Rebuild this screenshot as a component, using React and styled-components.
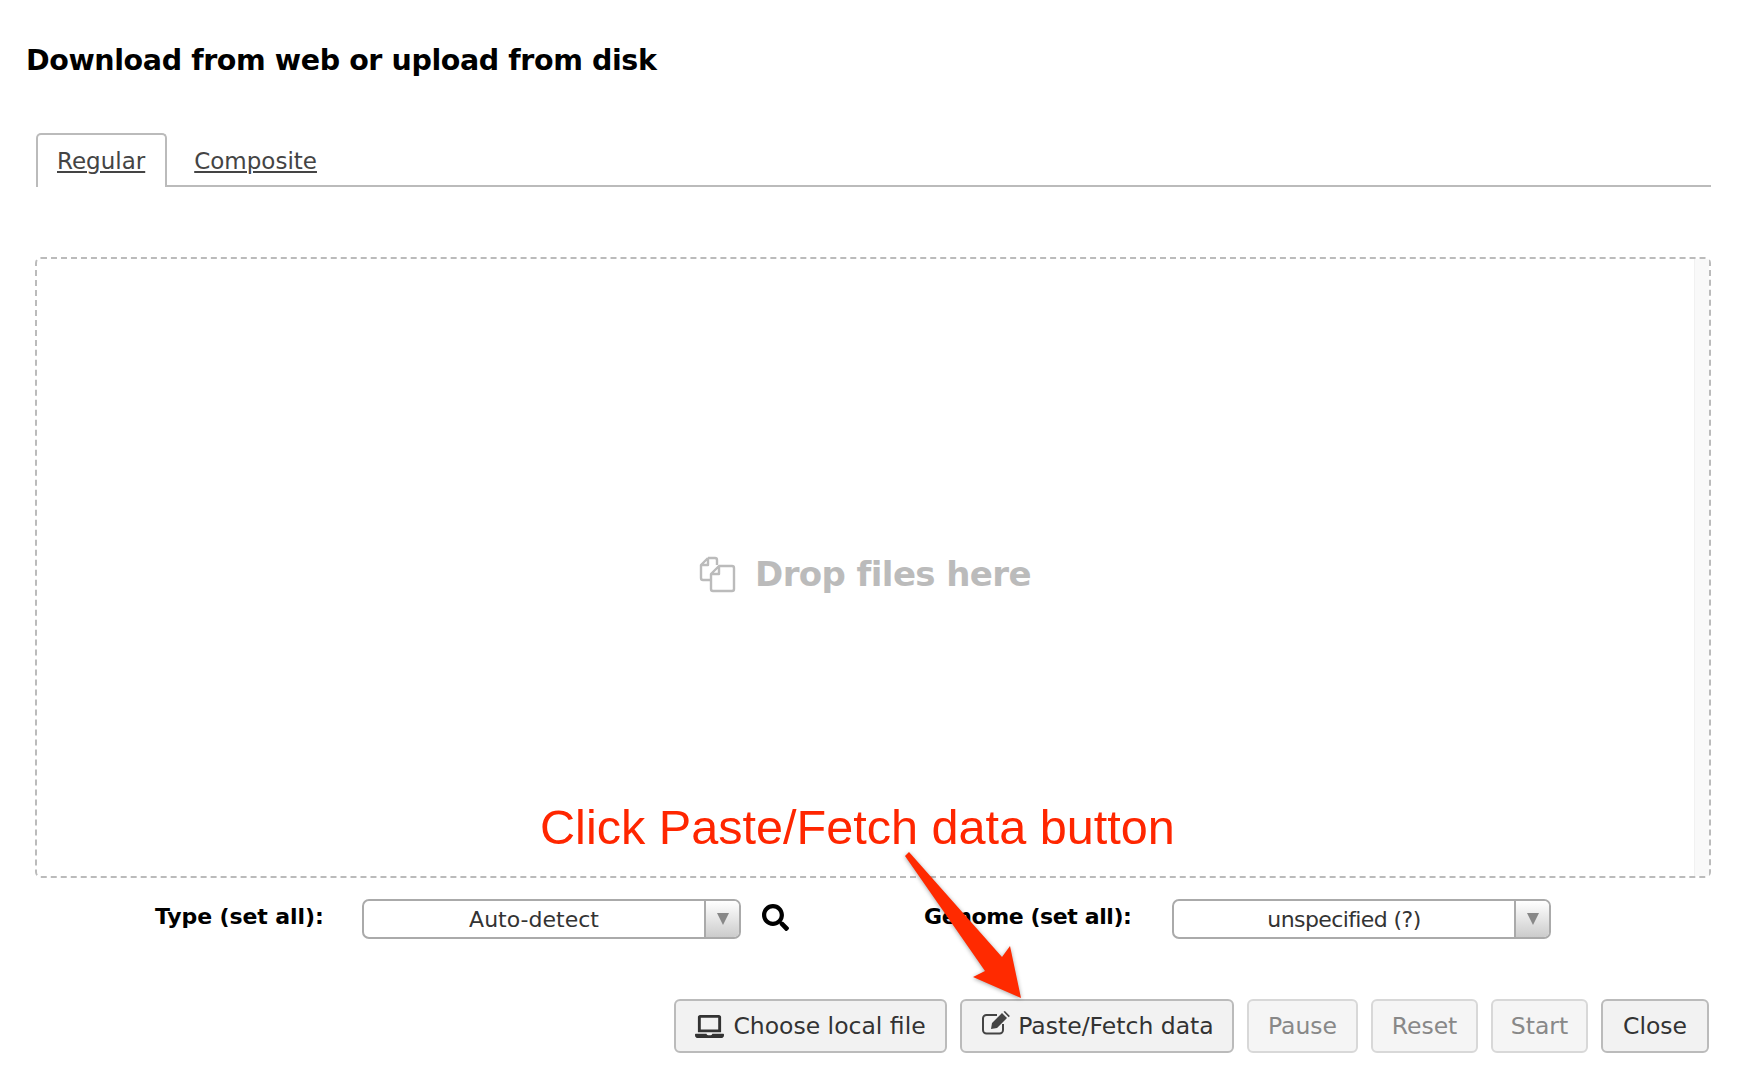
import React from "react";
import styled, { createGlobalStyle } from "styled-components";
import { FaSearch, FaLaptop } from "react-icons/fa";

const GlobalStyle = createGlobalStyle`
  html, body {
    margin: 0;
    padding: 0;
    background: #fff;
  }
  * {
    box-sizing: border-box;
  }
`;

const Page = styled.div`
  position: relative;
  width: 1737px;
  height: 1073px;
  overflow: hidden;
  padding: 43px 26px 0 26px;
  font-family: "DejaVu Sans", sans-serif;
  color: #333;
`;

const Title = styled.h1`
  margin: 0;
  height: 36px;
  font-size: 28.5px;
  line-height: 36px;
  font-weight: 700;
  color: #000;
  letter-spacing: -0.4px;
`;

const TabBar = styled.div`
  display: flex;
  margin: 54px 0 0 10px;
  width: 1675px;
  height: 54px;
  border-bottom: 2px solid #bbb;
`;

const Tab = styled.a`
  display: block;
  height: ${(p) => (p.$active ? "54px" : "52px")};
  padding: ${(p) => (p.$active ? "0 20px 0 19px" : "0 28px 0 27px")};
  line-height: ${(p) => (p.$active ? "52px" : "56px")};
  font-size: 23px;
  color: #444;
  text-decoration: underline;
  background: #fff;
  border: ${(p) => (p.$active ? "2px solid #bbb" : "0")};
  border-bottom: 0;
  border-radius: 5px 5px 0 0;
`;

const DropZone = styled.div`
  position: relative;
  display: flex;
  align-items: center;
  justify-content: center;
  gap: 19px;
  margin: 70px 0 0 9px;
  width: 1676px;
  height: 621px;
  padding: 13px 16px 0 0;
  border: 2px dashed #bbb;
  border-radius: 6px;
  color: #bbb;
`;

const ScrollStrip = styled.div`
  position: absolute;
  top: 0;
  right: 0;
  bottom: 0;
  width: 15px;
  background: #f9f9f9;
  border-left: 1px solid #f1f1f1;
`;

const DropText = styled.span`
  font-size: 34px;
  font-weight: 700;
  letter-spacing: -0.6px;
`;

const FilesIcon = styled.svg`
  width: 37px;
  height: 37px;
  fill: none;
  stroke: #bbb;
  stroke-width: 2.4;
  stroke-linejoin: round;
`;

const SetAllRow = styled.div`
  display: flex;
  align-items: center;
  height: 40px;
  margin-top: 21px;
  padding-left: 129px;
`;

const FieldLabel = styled.label`
  width: ${(p) => p.$width}px;
  font-size: 22px;
  font-weight: 700;
  letter-spacing: ${(p) => p.$tracking}px;
  color: #000;
  margin-top: -6px;
`;

const Select = styled.div`
  display: flex;
  width: 379px;
  height: 40px;
  border: 2px solid #aaa;
  border-radius: 7px;
  overflow: hidden;
  background: #fff;
`;

const SelectValue = styled.div`
  flex: 1;
  text-align: center;
  line-height: 37px;
  font-size: 22px;
  letter-spacing: ${(p) => p.$tracking || 0}px;
  color: #333;
`;

const SelectArrow = styled.div`
  display: flex;
  align-items: center;
  justify-content: center;
  width: 35px;
  border-left: 2px solid #aaa;
  background: linear-gradient(#fff, #ccc);
  &::after {
    content: "";
    border-left: 6px solid transparent;
    border-right: 6px solid transparent;
    border-top: 12px solid #888;
  }
`;

const SearchButton = styled.span`
  display: flex;
  width: 27px;
  margin: -3px 135px 0 21px;
  color: #000;
  font-size: 27px;
`;

const ButtonRow = styled.div`
  display: flex;
  justify-content: flex-end;
  gap: 13px;
  margin-top: 60px;
  padding-right: 2px;
`;

const Button = styled.button`
  display: flex;
  align-items: center;
  justify-content: center;
  gap: 9px;
  width: ${(p) => p.$width}px;
  height: 54px;
  padding: 0;
  font-family: inherit;
  font-size: 23.5px;
  color: ${(p) => (p.disabled ? "#888" : "#333")};
  background: ${(p) => (p.disabled ? "#f5f5f5" : "#f2f2f2")};
  border: 2px solid ${(p) => (p.disabled ? "#d8d8d8" : "#bbb")};
  border-radius: 6px;
  svg {
    font-size: 29px;
    flex: none;
  }
`;

const EditIcon = styled.svg`
  width: 29px;
  height: 24px;
  margin: -7px -2px 0 2px;
`;

const Callout = styled.div`
  position: absolute;
  left: 540px;
  top: 798px;
  font-family: "Liberation Sans", Arial, sans-serif;
  font-size: 48.6px;
  line-height: 58px;
  color: #ff2600;
  white-space: nowrap;
`;

const CalloutArrow = styled.svg`
  position: absolute;
  left: 880px;
  top: 830px;
  width: 170px;
  height: 190px;
  filter: drop-shadow(0 1px 2px rgba(0, 0, 0, 0.35));
`;

const App = () => {
  return (
    <Page>
      <GlobalStyle />
      <Title>Download from web or upload from disk</Title>
      <TabBar>
        <Tab $active>Regular</Tab>
        <Tab>Composite</Tab>
      </TabBar>
      <DropZone>
        <ScrollStrip />
        <FilesIcon viewBox="0 0 37 37">
          <path d="M9 2h7a2 2 0 0 1 2 2v5M9 2 2 9v13a2 2 0 0 0 2 2h7M9 2v7H2" />
          <path d="M20 10h13a2 2 0 0 1 2 2v21a2 2 0 0 1-2 2H14a2 2 0 0 1-2-2V18zM20 10v8h-8" />
        </FilesIcon>
        <DropText>Drop files here</DropText>
      </DropZone>
      <SetAllRow>
        <FieldLabel $width={207} $tracking={-0.1}>Type (set all):</FieldLabel>
        <Select>
          <SelectValue>Auto-detect</SelectValue>
          <SelectArrow />
        </Select>
        <SearchButton>
          <FaSearch />
        </SearchButton>
        <FieldLabel $width={248} $tracking={-0.4}>Genome (set all):</FieldLabel>
        <Select>
          <SelectValue $tracking={-0.6}>unspecified (?)</SelectValue>
          <SelectArrow />
        </Select>
      </SetAllRow>
      <ButtonRow>
        <Button $width={273}>
          <FaLaptop />
          Choose local file
        </Button>
        <Button $width={274}>
          <EditIcon viewBox="0 0 29 24">
            <path
              d="M21 13v6a3.5 3.5 0 0 1-3.5 3.5H4.5A3.5 3.5 0 0 1 1 19V7.5A3.5 3.5 0 0 1 4.5 4H15"
              fill="none"
              stroke="#444"
              strokeWidth="2"
            />
            <path d="M10 12 20 2l5 5-10 10-6 1zM21.5.8l1.4-.8 5 5-1.2 1.2z" fill="#444" />
          </EditIcon>
          Paste/Fetch data
        </Button>
        <Button $width={111} disabled>Pause</Button>
        <Button $width={107} disabled>Reset</Button>
        <Button $width={97} disabled>Start</Button>
        <Button $width={108}>Close</Button>
      </ButtonRow>
      <Callout>Click Paste/Fetch data button</Callout>
      <CalloutArrow viewBox="0 0 170 190">
        <path d="M29 22 122 127 130 116 141 168 93 147 105 141 25 26Z" fill="#ff2a00" />
      </CalloutArrow>
    </Page>
  );
};

export default App;
